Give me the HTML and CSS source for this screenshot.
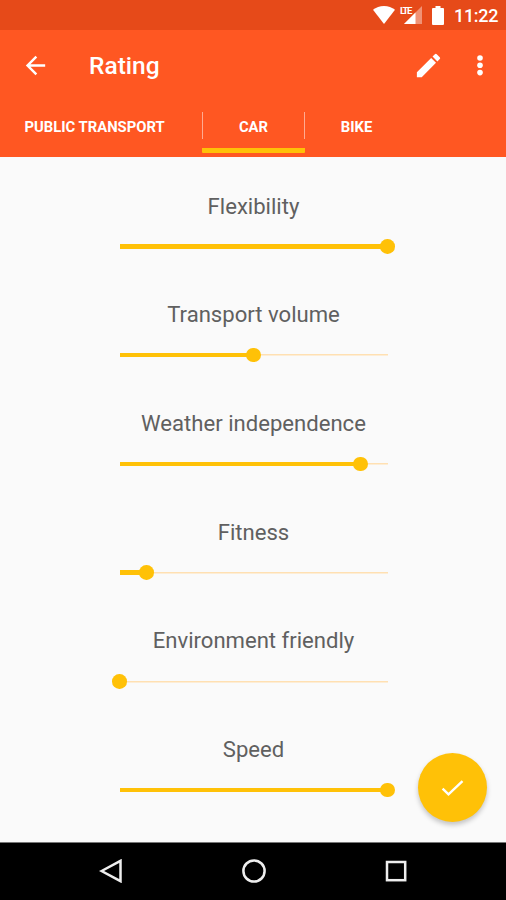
FILE: index.html
```html
<!DOCTYPE html>
<html lang="en">
<head>
<meta charset="utf-8">
<title>Rating</title>
<link rel="stylesheet" href="styles.css">
</head>
<body>
<div class="status">
  <svg class="wifi" width="22" height="18" viewBox="0 0 22 18"><path d="M11 18L0 3.800Q4.600 0 11 0T22 3.800Z"/></svg>
  <span class="cell">
    <svg width="18" height="18" viewBox="0 0 18 18"><path opacity=".4" d="M18 0V18H0Z"/><path d="M11.500 6.500V18H0Z"/></svg>
    <span class="lte">LTE</span>
  </span>
  <svg class="battery" width="12" height="19" viewBox="0 0 12 19"><path d="M3.500 0h5v2H11a1 1 0 0 1 1 1v15a1 1 0 0 1-1 1H1a1 1 0 0 1-1-1V3a1 1 0 0 1 1-1h2.500Z"/></svg>
  <span class="time">11:22</span>
</div>
<header class="header">
  <div class="toolbar">
    <svg class="back" width="29" height="29" viewBox="0 0 24 24"><path d="M20 11H7.830l5.590-5.590L12 4l-8 8 8 8 1.410-1.410L7.830 13H20z"/></svg>
    <h1 class="title">Rating</h1>
    <svg class="edit" width="31" height="31" viewBox="0 0 24 24"><path d="M3 17.250V21h3.750L17.810 9.940l-3.750-3.750L3 17.250zM20.710 7.040a1 1 0 0 0 0-1.410l-2.340-2.340a1 1 0 0 0-1.410 0l-1.830 1.830 3.750 3.750z"/></svg>
    <svg class="more" width="6" height="21" viewBox="0 0 6 21"><circle cx="3" cy="3" r="2.800"/><circle cx="3" cy="10.300" r="2.800"/><circle cx="3" cy="17.600" r="2.800"/></svg>
  </div>
  <nav class="tabs">
    <div class="tab tab-first"><span>PUBLIC TRANSPORT</span></div>
    <div class="tab tab-active"><span>CAR</span></div>
    <div class="tab"><span>BIKE</span></div>
  </nav>
</header>
<main class="ratings">
  <section class="rating"><div class="label"><span>Flexibility</span></div><div class="slider"><div class="fill" style="width:100%"></div></div></section>
  <section class="rating"><div class="label"><span>Transport volume</span></div><div class="slider"><div class="fill" style="width:50%"></div></div></section>
  <section class="rating"><div class="label"><span>Weather independence</span></div><div class="slider"><div class="fill" style="width:90%"></div></div></section>
  <section class="rating"><div class="label"><span>Fitness</span></div><div class="slider"><div class="fill" style="width:10%"></div></div></section>
  <section class="rating"><div class="label"><span>Environment friendly</span></div><div class="slider"><div class="fill" style="width:0%"></div></div></section>
  <section class="rating"><div class="label"><span>Speed</span></div><div class="slider"><div class="fill" style="width:100%"></div></div></section>
  <div class="fab"><svg width="26" height="20" viewBox="0 0 26 20"><path d="M2.600 10.700l5.900 5.700L22.500 3.200"/></svg></div>
</main>
<footer class="navbar">
  <div><svg width="24" height="24" viewBox="0 0 24 24"><path d="M2.600 12L21.500 1.800V22.200Z"/></svg></div>
  <div><svg width="24" height="24" viewBox="0 0 24 24"><circle cx="12" cy="12" r="10.600"/></svg></div>
  <div><svg width="24" height="24" viewBox="0 0 24 24"><rect x="3" y="3" width="18.200" height="18.200"/></svg></div>
</footer>
</body>
</html>
```
FILE: styles.css
```css
* { box-sizing: border-box; }
body {
  margin: 0;
  width: 506px;
  height: 900px;
  display: flex;
  flex-direction: column;
  overflow: hidden;
  background: #fafafa;
  font-family: Roboto, "Liberation Sans", sans-serif;
}
svg { display: block; fill: #fff; }
.status {
  height: 30px;
  flex: none;
  display: flex;
  align-items: flex-start;
  justify-content: flex-end;
  padding: 6px 9px 0 0;
  background: #e64a19;
  color: #fff;
}
.cell { position: relative; margin: 0 10px 0 9px; }
.lte {
  position: absolute;
  left: -4px;
  top: 0;
  padding-right: 1px;
  background: #e64a19;
  font-size: 9.500px;
  line-height: 9px;
  font-weight: 700;
  letter-spacing: -1.500px;
}
.time {
  width: 43px;
  margin-left: 10px;
  font-size: 18px;
  line-height: 20px;
  font-weight: 500;
  letter-spacing: -0.300px;
}
.header { height: 127px; flex: none; background: #ff5722; color: #fff; }
.toolbar { height: 70px; display: flex; align-items: center; padding: 0 23.500px 0 20.500px; }
.title { margin: 0 auto 0 39.500px; padding-top: 1.500px; font-size: 24.500px; line-height: 30px; font-weight: 500; }
.more { margin-left: 33px; }
.tabs { height: 57px; display: flex; font-size: 14.800px; font-weight: 700; }
.tab {
  width: 103px;
  height: 53px;
  display: flex;
  flex: none;
  align-items: center;
  justify-content: center;
  padding-top: 1px;
  white-space: nowrap;
}
.tab-first { width: 202px; padding-left: 24.500px; justify-content: flex-start; }
.tab-active {
  border-bottom: 5px solid #ffc107;
  padding-top: 6px;
  background:
    linear-gradient(#ffab91, #ffab91) -0.500px 12px / 1.500px 27px no-repeat,
    linear-gradient(#ffab91, #ffab91) right 12px / 1.500px 27px no-repeat;
  border-radius: 0 0 1px 1px;
}
.ratings {
  position: relative;
  flex: none;
  height: 684.500px;
  padding: 33.500px 0 0 1px;
  display: flex;
  flex-direction: column;
  align-items: center;
}
.rating { height: 108.700px; width: 268px; flex: none; }
.label {
  height: 30px;
  line-height: 30px;
  text-align: center;
  white-space: nowrap;
  color: #606060;
  font-size: 22.100px;
}
.slider {
  height: 15px;
  margin-top: 18.500px;
  display: flex;
  align-items: center;
  background: linear-gradient(#ffe0b2, #ffe0b2) center / 100% 1.500px no-repeat;
}
.fill {
  height: 4.500px;
  background: #ffc107;
  display: flex;
  align-items: center;
  justify-content: flex-end;
}
.fill::after {
  content: "";
  width: 14.600px;
  height: 14.600px;
  flex: none;
  margin-right: -7.300px;
  border-radius: 50%;
  background: #ffc107;
}
.fab {
  position: absolute;
  right: 19px;
  top: 596px;
  width: 69px;
  height: 69px;
  border-radius: 50%;
  display: flex;
  align-items: center;
  justify-content: center;
  background: #ffc107;
  box-shadow: 0 3px 5px rgba(0, 0, 0, .22);
}
.fab svg { fill: none; stroke: #fff; stroke-width: 2.400; }
.navbar {
  flex: 1;
  display: grid;
  grid-template-columns: repeat(3, 142.300px);
  justify-content: center;
  align-items: center;
  justify-items: center;
  padding-left: 1.500px;
  background: #000;
  border-top: 1px solid #777;
}
.navbar svg { fill: none; stroke: #eee; stroke-width: 2.500; }
```
